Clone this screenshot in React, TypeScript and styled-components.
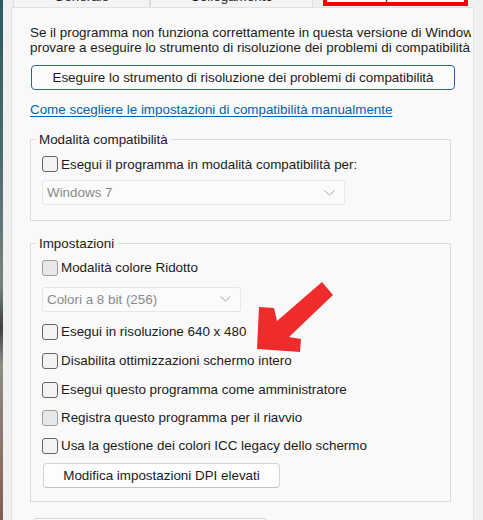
import React from 'react'
import styled, { createGlobalStyle } from 'styled-components'

const GlobalStyle = createGlobalStyle`
  html, body {
    margin: 0;
    padding: 0;
    background: #f0f0f0;
  }
  body {
    font-family: "Liberation Sans", Arial, sans-serif;
    font-size: 13.4px;
    color: #1b1b1b;
  }
  * { box-sizing: border-box; }
`

const Screen = styled.div`
  position: relative;
  display: flex;
  width: 483px;
  height: 520px;
  overflow: hidden;
  background: #f0f0f0;
`

const DesktopEdge = styled.div`
  flex: none;
  width: 3px;
  background: linear-gradient(
    to bottom,
    #2e585d 0%,
    #4d6a6c 30%,
    #77817f 55%,
    #3d3f40 63%,
    #8c8b86 70%,
    #8a6f63 90%,
    #7d5c51 100%
  );
`

const Window = styled.div`
  flex: 1;
  display: flex;
  flex-direction: column;
  padding: 0 9px 0 8px;
  min-width: 0;
`

const TabStrip = styled.div`
  flex: none;
  height: 7px;
  overflow: hidden;
  display: flex;
  align-items: flex-end;
  padding-left: 2px;
`

const Tab = styled.div<{ $w: number; $gap?: number }>`
  flex: none;
  width: ${p => p.$w}px;
  height: 26px;
  margin-left: ${p => p.$gap ?? 0}px;
  display: flex;
  align-items: flex-end;
  justify-content: center;
  padding-bottom: 3px;
  line-height: 15px;
  background: #f4f4f4;
  border: 1px solid #dedede;
  border-bottom: none;
`

const MarkedTab = styled(Tab)`
  margin-bottom: 1px;
  padding-bottom: 0;
  background: #fbfbfb;
  border: 4px solid #f80000;
`

const Panel = styled.div`
  flex: 1 0 auto;
  display: flex;
  flex-direction: column;
  align-items: flex-start;
  padding: 17px 22px 0 18px;
  background: #f9f9f9;
  border: 1px solid #e2e2e2;
  border-bottom: none;

  & > * {
    flex-shrink: 0;
  }
`

const Intro = styled.p`
  margin: 0 -20px 0 0;
  align-self: stretch;
  line-height: 15px;
  white-space: nowrap;
  overflow: hidden;
`

const AccentButton = styled.button`
  margin: 10px 0 0 1px;
  width: 424px;
  height: 25px;
  padding: 0;
  font: inherit;
  color: #1b1b1b;
  background: #fcfcfc;
  border: 1px solid #2a63a5;
  border-radius: 4px;
`

const Link = styled.a`
  margin-top: 12px;
  line-height: 15px;
  color: #0063b1;
  text-decoration: underline;
  text-underline-offset: 2px;
`

const Group = styled.fieldset<{ $mt: number; $pt: number; $pb: number }>`
  margin: ${p => p.$mt}px 0 0 0;
  width: 421px;
  min-width: 0;
  padding: ${p => p.$pt}px 0 ${p => p.$pb}px 11px;
  border: 1px solid #dcdcdc;
  display: flex;
  flex-direction: column;
  align-items: flex-start;

  & > * {
    flex-shrink: 0;
  }
`

const Legend = styled.legend`
  margin-left: -6px;
  padding: 0 3px;
  line-height: 15px;
`

const CheckRow = styled.label<{ $mt?: number }>`
  display: flex;
  align-items: center;
  gap: 3px;
  height: 16px;
  margin-top: ${p => p.$mt ?? 0}px;
  line-height: 15px;
  white-space: nowrap;
`

const Box = styled.span<{ $muted?: boolean }>`
  flex: none;
  width: 16px;
  height: 16px;
  border-radius: 3px;
  border: 1px solid ${p => (p.$muted ? '#9c9c9c' : '#666666')};
  background: ${p => (p.$muted ? '#e8e8e8' : '#f3f3f3')};
`

const Select = styled.div<{ $w: number; $mt: number }>`
  width: ${p => p.$w}px;
  height: 25px;
  margin-top: ${p => p.$mt}px;
  padding: 0 9px 0 4px;
  display: flex;
  align-items: center;
  justify-content: space-between;
  color: #8a8a8a;
  background: #fbfbfb;
  border: 1px solid #e6e6e6;
  border-radius: 3px;
`

const PlainButton = styled.button<{ $w: number; $mt: number; $ml?: number }>`
  flex: none;
  width: ${p => p.$w}px;
  height: 25px;
  margin: ${p => p.$mt}px 0 0 ${p => p.$ml ?? 0}px;
  padding: 0;
  font: inherit;
  color: #1b1b1b;
  background: #fdfdfd;
  border: 1px solid #d3d3d3;
  border-bottom-color: #c2c2c2;
  border-radius: 4px;
`

const Overlay = styled.svg`
  position: absolute;
  left: 0;
  top: 0;
  pointer-events: none;
`

function Chevron() {
  return (
    <svg width="11" height="6" viewBox="0 0 11 6">
      <path d="M0.5 0.5 L5.5 5 L10.5 0.5" fill="none" stroke="#a3a3a3" strokeWidth="1" />
    </svg>
  )
}

function Check({ label, mt, muted }: { label: string; mt?: number; muted?: boolean }) {
  return (
    <CheckRow $mt={mt}>
      <Box $muted={muted} />
      {label}
    </CheckRow>
  )
}

const settings = [
  { label: 'Esegui in risoluzione 640 x 480', mt: 12 },
  { label: 'Disabilita ottimizzazioni schermo intero', mt: 13 },
  { label: 'Esegui questo programma come amministratore', mt: 13 },
  { label: 'Registra questo programma per il riavvio', mt: 12, muted: true },
  { label: 'Usa la gestione dei colori ICC legacy dello schermo', mt: 12 },
]

export default function App() {
  return (
    <Screen>
      <GlobalStyle />
      <DesktopEdge />
      <Window>
        <TabStrip>
          <Tab $w={137}>Generale</Tab>
          <Tab $w={163}>Collegamento</Tab>
          <MarkedTab $w={145} $gap={10}>Compatibilità</MarkedTab>
        </TabStrip>
        <Panel>
          <Intro>
            Se il programma non funziona correttamente in questa versione di Windows,
            <br />
            provare a eseguire lo strumento di risoluzione dei problemi di compatibilità.
          </Intro>
          <AccentButton>Eseguire lo strumento di risoluzione dei problemi di compatibilità</AccentButton>
          <Link href="#">Come scegliere le impostazioni di compatibilità manualmente</Link>

          <Group $mt={14.5} $pt={9.5} $pb={14.5}>
            <Legend>Modalità compatibilità</Legend>
            <Check label="Esegui il programma in modalità compatibilità per:" />
            <Select $w={303} $mt={8}>
              Windows 7
              <Chevron />
            </Select>
          </Group>

          <Group $mt={15.5} $pt={8.5} $pb={13.5}>
            <Legend>Impostazioni</Legend>
            <Check label="Modalità colore Ridotto" muted />
            <Select $w={199} $mt={11}>
              Colori a 8 bit (256)
              <Chevron />
            </Select>
            {settings.map(s => (
              <Check key={s.label} label={s.label} mt={s.mt} muted={s.muted} />
            ))}
            <PlainButton $w={237} $mt={9} $ml={1}>Modifica impostazioni DPI elevati</PlainButton>
          </Group>

          <PlainButton $w={234} $mt={16} $ml={3}>Modifica impostazioni per tutti gli utenti</PlainButton>
        </Panel>
      </Window>

      <Overlay width="483" height="520" viewBox="0 0 483 520">
        <polygon
          points="257,349 259,307 274,308 277,321 322,282 333,295 289,337 301,339 300,352"
          fill="#ef2b2b"
        />
      </Overlay>
    </Screen>
  )
}
